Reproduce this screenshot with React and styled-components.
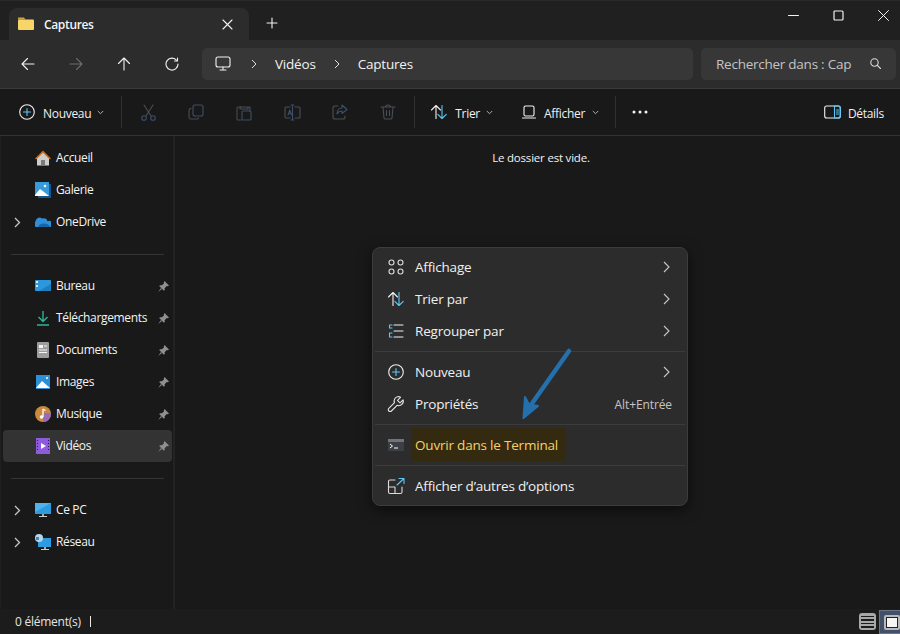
import React from 'react';
import styled, { createGlobalStyle } from 'styled-components';

const Global = createGlobalStyle`
  html, body { margin: 0; padding: 0; background: #191919; }
  body { font-family: "Open Sans", "Noto Sans", "Liberation Sans", sans-serif; color: #fff; }
  #root { width: 900px; height: 634px; overflow: hidden; }
  * { box-sizing: border-box; }
`;

const Window = styled.div`
  position: relative; width: 900px; height: 634px; display: flex; flex-direction: column;
  background: #191919; overflow: hidden; font-size: 12px; letter-spacing: -0.35px;
`;
const TitleBar = styled.div`
  height: 40px; flex: none; background: #202020; display: flex; align-items: flex-end; padding-left: 9px;
  border-top: 1px solid #2a2a2a;
`;
const Tab = styled.div`
  width: 240px; height: 32px; background: #2c2c2c; border-radius: 8px 8px 0 0; display: flex; align-items: center;
  padding: 0 16px 0 9px; font-weight: 600; color: #f4f4f4;
`;
const TabLabel = styled.span`margin-left: 10px; flex: 1; font-size: 12px;`;
const NewTab = styled.div`margin: 0 0 10px 16px; width: 14px; height: 14px; display: flex;`;
const WinControls = styled.div`
  margin-left: auto; align-self: flex-start; display: flex; padding: 9px 11px 0 0; gap: 34px;
`;
const NavBar = styled.div`
  height: 49px; flex: none; background: #2c2c2c; border-bottom: 1px solid #3a3a3a; display: flex; align-items: center;
  padding: 0 4px 1px 4px;
`;
const NavBtn = styled.div`width: 48px; height: 32px; display: flex; align-items: center; justify-content: center;`;
const Address = styled.div`
  margin-left: 6px; width: 491px; height: 32px; background: #373737; border-radius: 5px; display: flex; align-items: center;
  font-size: 13.5px; color: #f2f2f2; padding-left: 13px; letter-spacing: -0.2px;
`;
const Crumb = styled.span`margin-left: ${p => p.$gap}px; display: flex; align-items: center;`;
const Search = styled.div`
  margin-left: 8px; width: 195px; height: 32px; background: #373737; border-radius: 5px; display: flex; align-items: center;
  padding: 0 15px 0 15px; font-size: 13.5px; color: #c4c4c4; justify-content: space-between; letter-spacing: -0.25px;
`;
const Toolbar = styled.div`
  height: 47px; flex: none; background: #191919; border-bottom: 1px solid #323232; display: flex; align-items: center; padding-left: 18px;
  color: #f0f0f0; letter-spacing: -0.3px;
`;
const ToolText = styled.span`margin: 2px 0 0 ${p => p.$ml ?? 7}px; font-weight: 400;`;
const ToolChevron = styled.svg`margin-left: ${p => p.$ml ?? 6}px; width: 7px; height: 5px; flex: none;`;
const ToolSep = styled.div`width: 1px; height: 32px; background: #303030; margin: 0 ${p => p.$r ?? 0}px 0 ${p => p.$l ?? 0}px; flex: none;`;
const ToolIcon = styled.div`width: 48px; height: 32px; display: flex; align-items: center; justify-content: center; flex: none;`;
const Spacer = styled.div`flex: ${p => p.$w ? 'none' : 1}; width: ${p => p.$w ? `${p.$w}px` : 'auto'};`;
const DetailsBtn = styled.div`display: flex; align-items: center; padding-right: 16px;`;
const Main = styled.div`flex: 1; display: flex; min-height: 0;`;
const Sidebar = styled.nav`
  width: 175px; flex: none; border-right: 2px solid #232323; padding: 6px 1px 0 2px; display: flex; flex-direction: column;
  border-left: 1px solid #202020;
`;
const NavRow = styled.div`
  height: 32px; flex: none; display: flex; align-items: center; border-radius: 4px; position: relative; color: #f4f4f4;
  background: ${p => p.$active ? '#333333' : 'transparent'};
`;
const Expand = styled.div`width: 28px; flex: none; display: flex; justify-content: center;`;
const NavIcon = styled.div`width: 16px; height: 16px; flex: none; display: flex; margin-left: 4px;`;
const NavLabel = styled.span`margin: 0 0 2px 5px; flex: 1;`;
const Pin = styled.svg`width: 11px; height: 11px; margin-right: 3px; flex: none;`;
const SideDivider = styled.div`height: 1px; background: #343434; margin: 16px 8px 15px 8px; flex: none;`;
const Content = styled.main`flex: 1; display: flex; justify-content: center; padding: 15px 0 0 7px;`;
const Empty = styled.div`color: #f2f2f2; font-size: 11.5px; height: 14px; line-height: 14px; letter-spacing: -0.2px;`;
const StatusBar = styled.footer`
  height: 25px; flex: none; background: #1c1c1c; display: flex; align-items: center; padding-left: 15px; color: #e4e4e4; font-size: 12px; letter-spacing: -0.25px;
`;
const Caret = styled.div`width: 1px; height: 11px; background: #e8e8e8; margin-left: 9px;`;
const ViewBtns = styled.div`margin-left: auto; display: flex; align-items: center; height: 100%;`;
const ListBtn = styled.div`width: 17px; height: 17px; background: #a8a8a8; border-radius: 3px; margin-right: 3px; display: flex; flex-direction: column; justify-content: center; gap: 2px; padding: 0 2px;`;
const ListLine = styled.i`display: block; height: 1.5px; background: #1c1c1c;`;
const TileBtn = styled.div`width: 21px; height: 24px; background: #43506a; border: 1px solid #6a7484; border-right: 0; padding: 4px 0 3px 4px; display:flex;`;
const TileInner = styled.div`width: 16px; height: 15px; border: 2px solid #b9b9b9; background: #f5f5f5; outline: 1px solid #222; outline-offset: -3px; border-radius: 2px;`;

const Menu = styled.div`
  position: absolute; left: 372px; top: 247px; width: 316px; height: 259px; background: #2c2c2c; border: 1px solid #3c3c3c; border-radius: 8px;
  box-shadow: 0 4px 14px rgba(0,0,0,.55); padding: 3px 0 0; font-size: 13.5px; color: #f0f0f0; display: flex; flex-direction: column; letter-spacing: -0.2px;
`;
const MenuRow = styled.div`
  height: 32px; flex: none; display: flex; align-items: center; padding: 0 15px 0 14px; position: relative;
`;
const MenuIcon = styled.div`width: 18px; height: 18px; flex: none; display: flex; margin-right: 10px;`;
const MenuLabel = styled.span`flex: 1; color: ${p => p.$accent ? '#f7d068' : 'inherit'}; position: relative; z-index: 1;`;
const Shortcut = styled.span`font-size: 12px; color: #c6c6c6; letter-spacing: -0.1px;`;
const MenuChevron = styled.svg`width: 7px; height: 12px; margin-right: 2px;`;
const MenuSep = styled.div`height: 1px; background: #3c3c3c; margin: 4px 2px; flex: none;`;
const Highlight = styled.div`
  position: absolute; left: 38px; top: -1px; width: 155px; height: 33px; background: #332a10;
`;
const Arrow = styled.svg`position: absolute; left: 510px; top: 340px; width: 70px; height: 90px; pointer-events: none;`;

const Ln = ({ size = 16, c = '#f2f2f2', w = 1.1, vb = 16, children }) => (
  <svg width={size} height={size} viewBox={`0 0 ${vb} ${vb}`} fill="none" stroke={c} strokeWidth={w} strokeLinecap="round" strokeLinejoin="round">{children}</svg>
);
const Chev = ({ ml }) => <ToolChevron $ml={ml} viewBox="0 0 7 5" fill="none" stroke="#b0b0b0" strokeWidth="1"><path d="M.8 1l2.7 2.7L6.2 1" /></ToolChevron>;
const MChev = () => <MenuChevron viewBox="0 0 7 12" fill="none" stroke="#c8c8c8" strokeWidth="1.1"><path d="M1 1l5 5-5 5" /></MenuChevron>;
const D = '#4a4f57';
const DB = '#3b5068';

const FolderI = () => <svg width="16" height="16" viewBox="0 0 16 16"><path d="M0 1.500h6l1.500 2H0z" fill="#c9a24a" /><rect x="0" y="3.500" width="16" height="10.500" rx="1" fill="#f7d566" /></svg>;
const PlusCircle = ({ size = 18 }) => <Ln size={size} vb={18}><circle cx="9" cy="9" r="7.300" /><path d="M9 5.500v7M5.500 9h7" stroke="#5cc8f8" /></Ln>;
const SortI = ({ size = 18 }) => <Ln size={size} vb={18}><path d="M6 15.500V2.500M1.500 7l4.500-4.500L10.500 7" /><path d="M12 2.500v13M7.800 11.300l4.200 4.200 4.300-4.200" stroke="#5cc8f8" /></Ln>;

const HomeI = <svg width="16" height="16" viewBox="0 0 16 16"><path d="M2 8v7.500h12V8L8 2z" fill="#cdcdcd" /><rect x="6" y="10" width="4" height="5.500" fill="#7a7a7a" /><path d="M0 8.500L8 .5l8 8-1.200 1L8 2.800 1.200 9.500z" fill="#c96a1e" /></svg>;
const GalI = <svg width="16" height="16" viewBox="0 0 16 16"><rect x="3" y="2" width="13" height="14" fill="#14568f" /><rect x="0" y="0" width="14" height="14" fill="#3a9ad9" /><path d="M0 13l5-6 4 3 5 4H0z" fill="#fff" /><circle cx="10" cy="4" r="1.300" fill="#dff" /></svg>;
const Cloud = <svg width="16" height="16" viewBox="0 0 16 16"><path d="M1 13a3 3 0 0 1-.5-5.500A4 4 0 0 1 7 4.500a4 4 0 0 1 5.500 2.700A3 3 0 0 1 15.500 13z" fill="#2f8fd8" /><path d="M3 13c1-3 4-4 7-3.500 2 .3 4 1.500 5.500 3.500z" fill="#1565a8" /></svg>;
const BureauI = <svg width="16" height="16" viewBox="0 0 16 16"><rect x="0" y="2" width="16" height="11" rx="1" fill="#2c97dc" /><rect x="1" y="3" width="2" height="2" fill="#cfeeff" /><rect x="1" y="7" width="2" height="2" fill="#cfeeff" /><path d="M4 13L16 6v7z" fill="#1d7fc0" /></svg>;
const DlI = <svg width="16" height="16" viewBox="0 0 16 16" fill="none" stroke="#2bb596" strokeWidth="1.400"><path d="M8 1v10M3.500 7L8 11.500 12.500 7M2 15h12" /></svg>;
const DocI = <svg width="16" height="16" viewBox="0 0 16 16"><rect x="2" y="0" width="12" height="16" rx="1" fill="#9d9d9d" /><rect x="4" y="3" width="4" height="3" fill="#f4f4f4" /><path d="M9 3.500h3v1H9zM4 7.500h8v1H4zM4 10h8v1H4z" fill="#f4f4f4" /></svg>;
const ImgI = <svg width="16" height="16" viewBox="0 0 16 16"><rect x="1" y="1" width="14" height="14" fill="#2d8fd6" /><path d="M1 14l6-7 8 7z" fill="#fff" /><circle cx="12" cy="4" r="1" fill="#fff" /></svg>;
const MusI = <svg width="16" height="16" viewBox="0 0 16 16"><circle cx="8" cy="8" r="8" fill="#c98a3f" /><path d="M8 8a8 8 0 0 1 8 0 8 8 0 0 1-8 8z" fill="#9a6bb8" /><path d="M8 3v8" stroke="#fff" strokeWidth="1.300" /><circle cx="6.500" cy="11" r="1.800" fill="#fff" /><path d="M8 3l2.500 1.500" stroke="#fff" strokeWidth="1.200" /></svg>;
const VidI = <svg width="16" height="16" viewBox="0 0 16 16"><rect x="1" y="0" width="14" height="16" fill="#8d5bdc" /><path d="M6 5l5 3-5 3z" fill="#fff" /><path d="M2 2h1v1H2zM2 5h1v1H2zM2 8h1v1H2zM2 11h1v1H2zM13 2h1v1h-1zM13 5h1v1h-1zM13 8h1v1h-1zM13 11h1v1h-1z" fill="#2a1a50" /></svg>;
const PcI = <svg width="16" height="16" viewBox="0 0 16 16"><rect x="0" y="1" width="16" height="11" fill="#2d9be0" /><path d="M0 1h16L0 10z" fill="#4fb3ee" /><rect x="7" y="12" width="2" height="2" fill="#aaa" /><rect x="4" y="14" width="8" height="1" fill="#ccc" /></svg>;
const NetI = <svg width="16" height="16" viewBox="0 0 16 16"><rect x="3" y="4" width="13" height="9" fill="#2d9be0" /><rect x="9" y="13" width="2" height="2" fill="#aaa" /><rect x="6" y="15" width="8" height="1" fill="#ccc" /><circle cx="4" cy="4" r="4" fill="#b9d6ea" /><path d="M1 3h3v3H1z" fill="#3f86b8" /></svg>;

const PinI = () => <Pin viewBox="0 0 11 11" fill="#8f8f8f"><path d="M6.500 0L11 4.500 9.800 5.200 8.800 5 6.700 7.200 6.700 9 5.900 9.800 1.200 5.100 2 4.300 3.900 4.300 6 2.200 5.800 1.200z" /><path d="M3 7L.3 10.700 4 8z" /></Pin>;
const ExpandI = () => <svg width="7" height="11" viewBox="0 0 7 11" fill="none" stroke="#c8c8c8" strokeWidth="1.300"><path d="M1 1l4.500 4.500L1 10" /></svg>;

const Row = ({ icon, label, pin, active, expand }) => (
  <NavRow $active={active}>
    <Expand>{expand && <ExpandI />}</Expand>
    <NavIcon>{icon}</NavIcon>
    <NavLabel>{label}</NavLabel>
    {pin && <PinI />}
  </NavRow>
);

const CrumbChevron = () => <svg width="6" height="10" viewBox="0 0 6 10" fill="none" stroke="#e0e0e0"><path d="M1 1l4 4-4 4" /></svg>;

export default function App() {
  return (
    <Window>
      <Global />
      <TitleBar>
        <Tab>
          <FolderI />
          <TabLabel>Captures</TabLabel>
          <Ln size={11} vb={11}><path d="M1 1l9 9M10 1l-9 9" /></Ln>
        </Tab>
        <NewTab><Ln size={14} vb={14}><path d="M7 2v10M2 7h10" /></Ln></NewTab>
        <WinControls>
          <Ln size={11} vb={11} w="1"><path d="M.5 5.500h10" /></Ln>
          <Ln size={11} vb={11} w="1.200"><rect x="1" y="1" width="9" height="9" rx="1" /></Ln>
          <Ln size={11} vb={11} w="1"><path d="M.5.500l10 10M10.500.500l-10 10" /></Ln>
        </WinControls>
      </TitleBar>
      <NavBar>
        <NavBtn><Ln size={14} vb={14}><path d="M13 7H1M6.500 1.500L1 7l5.500 5.500" /></Ln></NavBtn>
        <NavBtn><Ln size={14} vb={14} c="#6c6c6c"><path d="M1 7h12M7.500 1.500L13 7l-5.500 5.500" /></Ln></NavBtn>
        <NavBtn><Ln size={14} vb={14}><path d="M7 13V1M1.500 6.500L7 1l5.500 5.500" /></Ln></NavBtn>
        <NavBtn><Ln size={14} vb={14}><path d="M11.800 3.500A6 6 0 1 0 13 7" /><path d="M12.500 1v3h-3" /></Ln></NavBtn>
        <Address>
          <Ln size={16} vb={16}><rect x="1" y="1" width="14" height="10" rx="2" /><path d="M8 11v2M5 14h6" /></Ln>
          <Crumb $gap={20}><CrumbChevron /></Crumb>
          <Crumb $gap={18}>Vidéos</Crumb>
          <Crumb $gap={18}><CrumbChevron /></Crumb>
          <Crumb $gap={18}>Captures</Crumb>
        </Address>
        <Search>
          <span>Rechercher dans : Cap</span>
          <Ln size={11} vb={11} c="#dcdcdc"><circle cx="4.500" cy="4.500" r="3.700" /><path d="M7.300 7.300L10.500 10.500" /></Ln>
        </Search>
      </NavBar>
      <Toolbar>
        <PlusCircle />
        <ToolText>Nouveau</ToolText>
        <Chev />
        <ToolSep $l={17} $r={2} />
        <ToolIcon><Ln size={17} vb={17} c={D}><path d="M4 1l7 11M13 1L6 12" /><circle cx="4" cy="14" r="2.300" stroke={DB} /><circle cx="13" cy="14" r="2.300" stroke={DB} /></Ln></ToolIcon>
        <ToolIcon><Ln size={16} vb={16} c={D}><rect x="5" y="1" width="10" height="11" rx="2" stroke={DB} /><path d="M3 4.500A2 2 0 0 0 1 6.500V13a2 2 0 0 0 2 2h6a2 2 0 0 0 1.500-1" strokeDasharray="2 1" /></Ln></ToolIcon>
        <ToolIcon><Ln size={17} vb={17} c={D}><path d="M5 3H2a1 1 0 0 0-1 1v11a1 1 0 0 0 1 1h3" strokeDasharray="2 1" /><path d="M4 3h8v2H4zM13 3h1v4" /><rect x="6" y="7" width="9" height="9" rx="1" stroke={DB} /></Ln></ToolIcon>
        <ToolIcon><Ln size={17} vb={17} c={D}><path d="M6 3H2a1 1 0 0 0-1 1v9a1 1 0 0 0 1 1h4M11 3h4a1 1 0 0 1 1 1v9a1 1 0 0 1-1 1h-4" /><path d="M8.500 1v15M7 1h3M7 16h3M4 11l1.800-5L7.500 11M4.500 9.500h2.500" stroke={DB} /></Ln></ToolIcon>
        <ToolIcon><Ln size={16} vb={16} c={D}><path d="M6 2H3a2 2 0 0 0-2 2v9a2 2 0 0 0 2 2h8a2 2 0 0 0 2-2v-1" /><path d="M10 1l5 4.500L10 9.500V7c-3 0-4 1-5 3 0-4 2-6 5-6z" stroke={DB} /></Ln></ToolIcon>
        <ToolIcon><Ln size={16} vb={16} c={D}><path d="M1 3h14M5.500 3a2.500 2 0 0 1 5 0M3 3l1 11a1.500 1.500 0 0 0 1.500 1h5a1.500 1.500 0 0 0 1.500-1l1-11M6.500 6.500v5M9.500 6.500v5" /></Ln></ToolIcon>
        <ToolSep $l={2} $r={15} />
        <SortI />
        <ToolText $ml={7}>Trier</ToolText>
        <Chev />
        <Spacer $w={29} />
        <Ln size={14} vb={14}><rect x="2" y="1" width="10" height="10" rx="1.500" /><path d="M.5 13h13" /></Ln>
        <ToolText $ml={8}>Afficher</ToolText>
        <Chev ml={7} />
        <ToolSep $l={16} />
        <ToolIcon><svg width="16" height="4" viewBox="0 0 16 4" fill="#f4f4f4"><circle cx="2" cy="2" r="1.500" /><circle cx="8" cy="2" r="1.500" /><circle cx="14" cy="2" r="1.500" /></svg></ToolIcon>
        <Spacer />
        <DetailsBtn>
          <Ln size={17} vb={17}><rect x=".7" y="2" width="15.600" height="12" rx="2" /><path d="M10.500 2h3.800a2 2 0 0 1 2 2v8a2 2 0 0 1-2 2h-3.800zM12.500 6h2M12.500 8h2M12.500 10h2" stroke="#5cc8f8" /></Ln>
          <ToolText $ml={7}>Détails</ToolText>
        </DetailsBtn>
      </Toolbar>
      <Main>
        <Sidebar>
          <Row label="Accueil" icon={HomeI} />
          <Row label="Galerie" icon={GalI} />
          <Row label="OneDrive" icon={Cloud} expand />
          <SideDivider />
          <Row label="Bureau" icon={BureauI} pin />
          <Row label="Téléchargements" icon={DlI} pin />
          <Row label="Documents" icon={DocI} pin />
          <Row label="Images" icon={ImgI} pin />
          <Row label="Musique" icon={MusI} pin />
          <Row label="Vidéos" icon={VidI} pin active />
          <SideDivider />
          <Row label="Ce PC" icon={PcI} expand />
          <Row label="Réseau" icon={NetI} expand />
        </Sidebar>
        <Content><Empty>Le dossier est vide.</Empty></Content>
      </Main>
      <StatusBar>
        <span>0 élément(s)</span>
        <Caret />
        <ViewBtns>
          <ListBtn><ListLine /><ListLine /><ListLine /><ListLine /></ListBtn>
          <TileBtn><TileInner /></TileBtn>
        </ViewBtns>
      </StatusBar>

      <Menu>
        <MenuRow><MenuIcon><Ln size={18} vb={18} c="#dcdcdc"><rect x="2" y="2" width="5" height="5" rx="2.500" /><rect x="11" y="2" width="5" height="5" rx="2.500" /><rect x="2" y="11" width="5" height="5" rx="2.500" /><rect x="11" y="11" width="5" height="5" rx="2.500" /></Ln></MenuIcon><MenuLabel>Affichage</MenuLabel><MChev /></MenuRow>
        <MenuRow><MenuIcon><SortI /></MenuIcon><MenuLabel>Trier par</MenuLabel><MChev /></MenuRow>
        <MenuRow><MenuIcon><Ln size={18} vb={18}><path d="M7 3h9M7 9h9M7 15h9" /><path d="M5 3H2.500v3H5M5 11H2.500v4H5" stroke="#5cc8f8" /></Ln></MenuIcon><MenuLabel>Regrouper par</MenuLabel><MChev /></MenuRow>
        <MenuSep />
        <MenuRow><MenuIcon><PlusCircle /></MenuIcon><MenuLabel>Nouveau</MenuLabel><MChev /></MenuRow>
        <MenuRow><MenuIcon><Ln size={18} vb={18} c="#e4e4e4"><path d="M11.500 1.500a4.500 4.500 0 0 0-4 6.200L1.800 13.400a1.800 1.800 0 0 0 2.600 2.600l5.700-5.700a4.500 4.500 0 0 0 6-5.500L13 7.800 10.500 5.300l3-3a4.500 4.500 0 0 0-2-.8z" /></Ln></MenuIcon><MenuLabel>Propriétés</MenuLabel><Shortcut>Alt+Entrée</Shortcut></MenuRow>
        <MenuSep />
        <MenuRow>
          <MenuIcon><svg width="18" height="18" viewBox="0 0 18 18"><rect x="1" y="3" width="16" height="12" fill="#3c3f44" /><rect x="1" y="3" width="16" height="3" fill="#70757c" /><path d="M3 8l2.500 2L3 12" fill="none" stroke="#fff" /><path d="M7 12h4" stroke="#fff" /></svg></MenuIcon>
          <Highlight />
          <MenuLabel $accent>Ouvrir dans le Terminal</MenuLabel>
        </MenuRow>
        <MenuSep />
        <MenuRow><MenuIcon><Ln size={18} vb={18} c="#dcdcdc"><path d="M8 3H3a1.500 1.500 0 0 0-1.500 1.500V15A1.500 1.500 0 0 0 3 16.500h10.500A1.500 1.500 0 0 0 15 15v-5M1.500 10H8v6.500" /><path d="M10 8l7-6.500M12 1.500h5v5" stroke="#5cc8f8" /></Ln></MenuIcon><MenuLabel>Afficher d’autres d’options</MenuLabel></MenuRow>
      </Menu>
      <Arrow viewBox="0 0 70 90" fill="none" stroke="#2470ad" strokeLinecap="round" strokeLinejoin="round">
        <path d="M59 11L16 72" strokeWidth="4.500" />
        <path d="M13.500 78L15 57l4 7.500 9 1.500z" fill="#2470ad" strokeWidth="2" />
      </Arrow>
    </Window>
  );
}
